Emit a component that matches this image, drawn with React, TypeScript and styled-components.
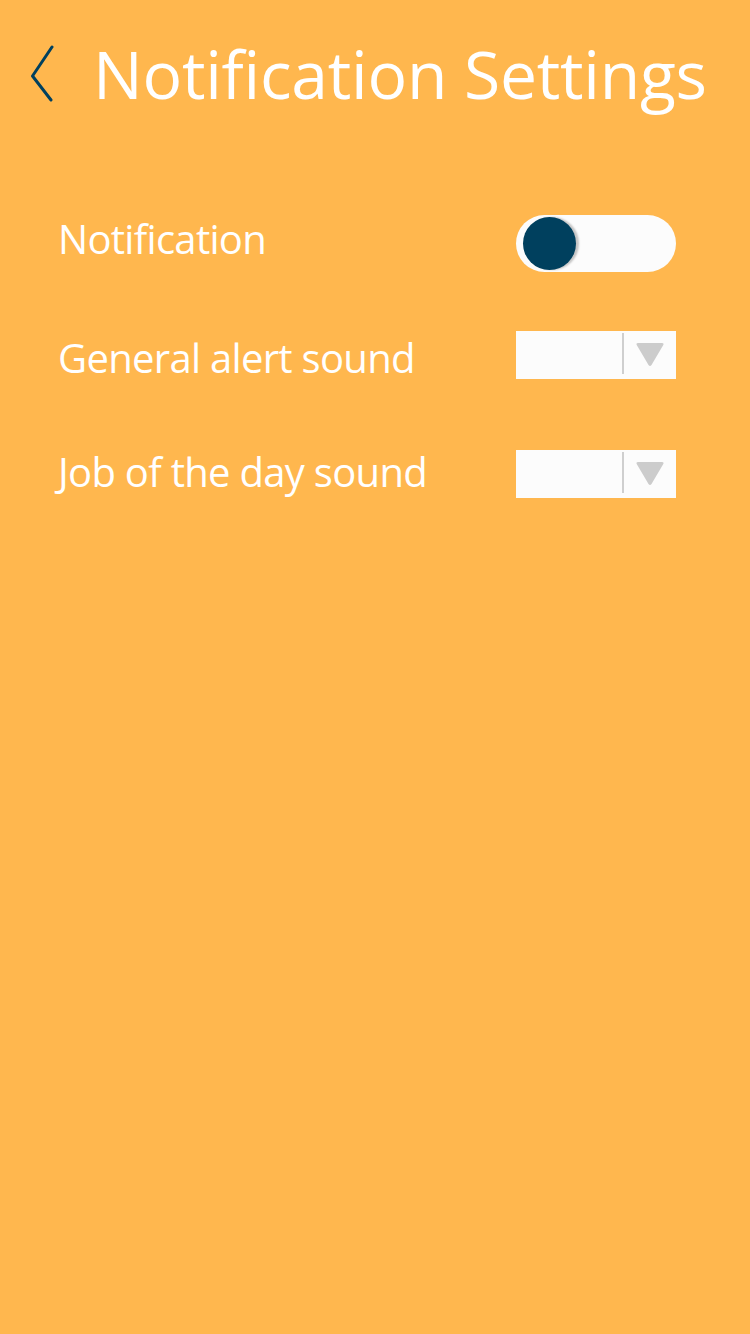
import React from "react";
import styled, { createGlobalStyle } from "styled-components";

const Global = createGlobalStyle`
  html, body { margin: 0; padding: 0; }
  body { background: #FFB74E; font-family: "Open Sans", "Noto Sans", sans-serif; }
`;

const Page = styled.div`
  width: 750px;
  min-height: 1334px;
  background: #FFB74E;
  display: flex;
  flex-direction: column;
`;

const Header = styled.header`
  display: flex;
  align-items: flex-start;
  gap: 27px;
  padding: 40px 0 0 30px;
`;

const BackButton = styled.button`
  border: 0;
  background: none;
  padding: 0;
  width: 36px;
  height: 62px;
  display: flex;
  align-items: flex-start;
  justify-content: flex-start;
`;

const Title = styled.h1`
  margin: 0;
  color: #fff;
  font-weight: 400;
  font-size: 66px;
  letter-spacing: -0.25px;
  line-height: 1;
  white-space: nowrap;
`;

const List = styled.div`
  display: flex;
  flex-direction: column;
  padding: 81px 74px 0 58px;
`;

const Row = styled.div<{ $h: number }>`
  height: ${(p) => p.$h}px;
  display: flex;
  align-items: center;
  justify-content: space-between;
`;

const Label = styled.span<{ $nudge?: number }>`
  color: #fff;
  font-size: 40px;
  letter-spacing: -0.7px;
  line-height: 1;
  margin-top: ${(p) => p.$nudge ?? 0}px;
`;

const Switch = styled.div<{ $on?: boolean }>`
  width: 160px;
  height: 57px;
  border-radius: 29px;
  background: #fcfcfc;
  display: flex;
  align-items: center;
  padding: 0 7px;
  box-sizing: border-box;
  justify-content: ${(p) => (p.$on ? "flex-end" : "flex-start")};
`;

const Knob = styled.div`
  width: 53px;
  height: 53px;
  border-radius: 50%;
  background: #00405E;
  box-shadow: 3px 0 2px rgba(0, 0, 0, 0.22);
`;

const Select = styled.div`
  width: 160px;
  height: 48px;
  background: #fcfcfc;
  display: flex;
  align-items: flex-start;
  justify-content: flex-end;
`;

const Divider = styled.div`
  width: 2px;
  height: 41px;
  margin-top: 2px;
  background: #cfcfcf;
`;

const Arrow = styled.div`
  width: 52px;
  height: 48px;
  display: flex;
  align-items: center;
  justify-content: center;
`;

const Chevron = () => (
  <svg width="36" height="62" viewBox="0 0 36 62">
    <path d="M22 7 L2.5 36 L21 60" fill="none" stroke="#00405E" strokeWidth="3" strokeLinecap="round" strokeLinejoin="round" />
  </svg>
);

const Triangle = () => (
  <svg width="30" height="25" viewBox="0 0 30 25">
    <path d="M3 1 H27 Q29.5 1 28 3.5 L16.5 23 Q15 25 13.5 23 L2 3.5 Q0.5 1 3 1 Z" fill="#cccccc" />
  </svg>
);

const Dropdown = () => (
  <Select>
    <Divider />
    <Arrow>
      <Triangle />
    </Arrow>
  </Select>
);

export default function App() {
  return (
    <Page>
      <Global />
      <Header>
        <BackButton>
          <Chevron />
        </BackButton>
        <Title>Notification Settings</Title>
      </Header>
      <List>
        <Row $h={112}>
          <Label $nudge={-8}>Notification</Label>
          <Switch>
            <Knob />
          </Switch>
        </Row>
        <Row $h={111}>
          <Label $nudge={7}>General alert sound</Label>
          <Dropdown />
        </Row>
        <Row $h={127}>
          <Label $nudge={-4}>Job of the day sound</Label>
          <Dropdown />
        </Row>
      </List>
    </Page>
  );
}
